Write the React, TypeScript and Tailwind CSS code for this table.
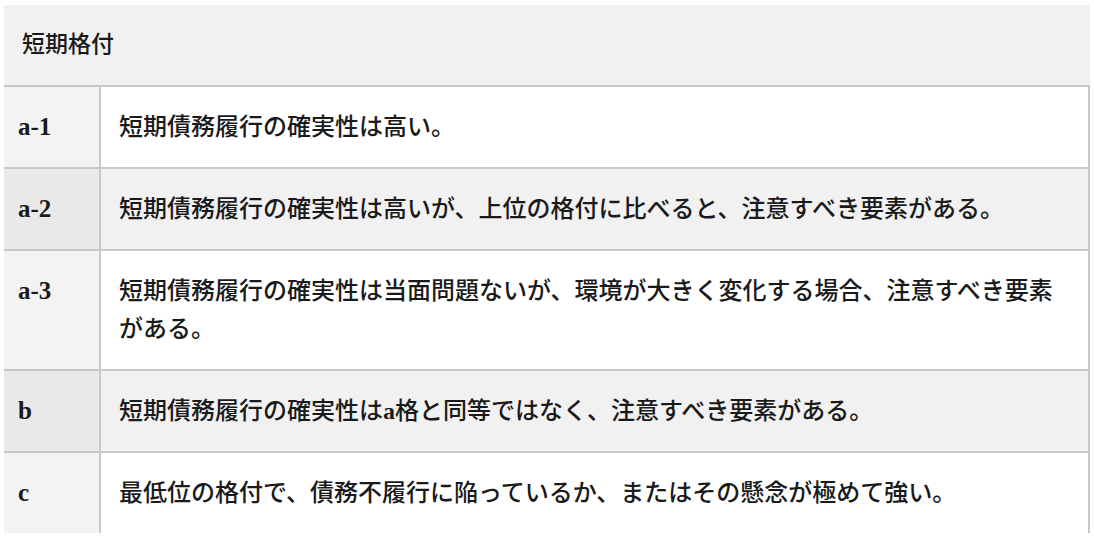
const rows = [
  { label: 'a-1', text: '短期債務履行の確実性は高い。', shade: false },
  { label: 'a-2', text: '短期債務履行の確実性は高いが、上位の格付に比べると、注意すべき要素がある。', shade: true },
  { label: 'a-3', text: '短期債務履行の確実性は当面問題ないが、環境が大きく変化する場合、注意すべき要素がある。', shade: false },
  { label: 'b', text: '短期債務履行の確実性はa格と同等ではなく、注意すべき要素がある。', shade: true },
  { label: 'c', text: '最低位の格付で、債務不履行に陥っているか、またはその懸念が極めて強い。', shade: false },
];

const jp = { fontFamily: '"Liberation Serif", "Noto Sans CJK JP", serif' };

export default function App() {
  return (
    <div className="min-h-[538px] bg-white pt-[5px] pl-[4px] text-[#1a1a1a]" style={jp}>
      <div className="w-[1086px]">
        <div className="flex h-[80px] items-center bg-[#f1f1f1] pl-[18px] text-[23px] font-medium">短期格付</div>
        {rows.map((r) => (
          <div key={r.label} className="flex border-t-2 border-r-2 border-[#c8c8c8]">
            <div
              className={`w-[97px] shrink-0 border-r-2 border-[#c8c8c8] pl-[14px] pt-[21px] text-[25px] leading-[38px] font-bold ${
                r.shade ? 'bg-[#e9e9e9]' : 'bg-[#f3f3f3]'
              }`}
            >
              {r.label}
            </div>
            <div
              className={`flex-1 pl-[18px] pr-[24px] py-[21px] text-[24px] leading-[38px] font-medium ${
                r.shade ? 'bg-[#f1f1f1]' : 'bg-white'
              }`}
            >
              {r.text.split('a').map((part, i, arr) => (
                <span key={i}>
                  {part}
                  {i < arr.length - 1 && <span className="font-bold">a</span>}
                </span>
              ))}
            </div>
          </div>
        ))}
      </div>
    </div>
  );
}
